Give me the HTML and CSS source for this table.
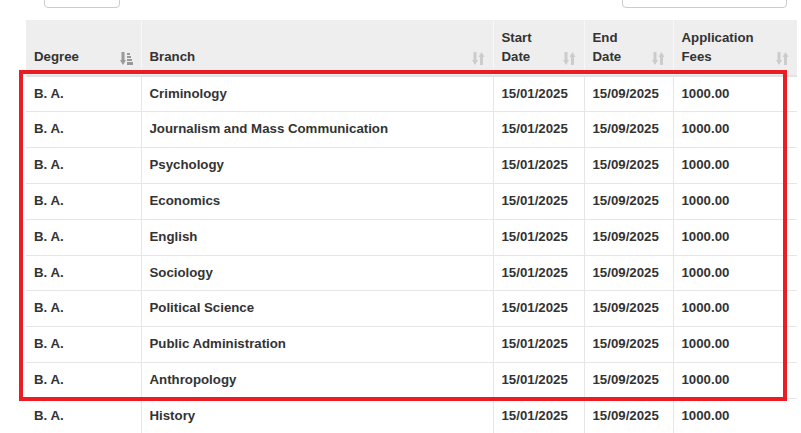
FILE: index.html
```html
<!DOCTYPE html>
<html>
<head>
<meta charset="utf-8">
<link rel="stylesheet" href="styles.css">
</head>
<body>
<div class="wrap">
  <div class="controls">
    <div class="select-box"></div>
    <div class="search-box"></div>
  </div>
  <table class="grid">
    <colgroup>
      <col class="c-degree"><col class="c-branch"><col class="c-start"><col class="c-end"><col class="c-fees">
    </colgroup>
    <thead>
      <tr>
        <th><div class="th-in"><span>Degree</span>
          <svg class="sort active" width="13" height="13" viewBox="0 0 13 13"><rect x="1.5" y="0" width="3" height="9"/><polygon points="0,8 6,8 3,13"/><rect x="7" y="1" width="3" height="2"/><rect x="7" y="4" width="4" height="2"/><rect x="7" y="7" width="5" height="2"/><rect x="7" y="10" width="6" height="3"/></svg></div></th>
        <th><div class="th-in"><span>Branch</span>
          <svg class="sort" width="13" height="13" viewBox="0 0 13 13"><rect x="1.5" y="0" width="3" height="9"/><polygon points="0,8 6,8 3,13"/><polygon points="6.5,5 12.5,5 9.5,0"/><rect x="8" y="4" width="3" height="9"/></svg></div></th>
        <th><div class="th-in"><span>Start<br>Date</span>
          <svg class="sort" width="13" height="13" viewBox="0 0 13 13"><rect x="1.5" y="0" width="3" height="9"/><polygon points="0,8 6,8 3,13"/><polygon points="6.5,5 12.5,5 9.5,0"/><rect x="8" y="4" width="3" height="9"/></svg></div></th>
        <th><div class="th-in"><span>End<br>Date</span>
          <svg class="sort" width="13" height="13" viewBox="0 0 13 13"><rect x="1.5" y="0" width="3" height="9"/><polygon points="0,8 6,8 3,13"/><polygon points="6.5,5 12.5,5 9.5,0"/><rect x="8" y="4" width="3" height="9"/></svg></div></th>
        <th><div class="th-in"><span>Application<br>Fees</span>
          <svg class="sort" width="13" height="13" viewBox="0 0 13 13"><rect x="1.5" y="0" width="3" height="9"/><polygon points="0,8 6,8 3,13"/><polygon points="6.5,5 12.5,5 9.5,0"/><rect x="8" y="4" width="3" height="9"/></svg></div></th>
      </tr>
    </thead>
    <tbody>
      <tr><td>B. A.</td><td>Criminology</td><td>15/01/2025</td><td>15/09/2025</td><td>1000.00</td></tr>
      <tr><td>B. A.</td><td>Journalism and Mass Communication</td><td>15/01/2025</td><td>15/09/2025</td><td>1000.00</td></tr>
      <tr><td>B. A.</td><td>Psychology</td><td>15/01/2025</td><td>15/09/2025</td><td>1000.00</td></tr>
      <tr><td>B. A.</td><td>Economics</td><td>15/01/2025</td><td>15/09/2025</td><td>1000.00</td></tr>
      <tr><td>B. A.</td><td>English</td><td>15/01/2025</td><td>15/09/2025</td><td>1000.00</td></tr>
      <tr><td>B. A.</td><td>Sociology</td><td>15/01/2025</td><td>15/09/2025</td><td>1000.00</td></tr>
      <tr><td>B. A.</td><td>Political Science</td><td>15/01/2025</td><td>15/09/2025</td><td>1000.00</td></tr>
      <tr><td>B. A.</td><td>Public Administration</td><td>15/01/2025</td><td>15/09/2025</td><td>1000.00</td></tr>
      <tr><td>B. A.</td><td>Anthropology</td><td>15/01/2025</td><td>15/09/2025</td><td>1000.00</td></tr>
      <tr><td>B. A.</td><td>History</td><td>15/01/2025</td><td>15/09/2025</td><td>1000.00</td></tr>
    </tbody>
  </table>
  <div class="highlight"></div>
</div>
</body>
</html>
```
FILE: styles.css
```css
html, body {
  margin: 0;
  padding: 0;
  background: #fff;
  overflow: hidden;
}
body {
  font-family: "Liberation Sans", Arial, sans-serif;
  font-size: 13.25px;
  color: #333;
}
.wrap {
  position: relative;
  display: flow-root;
  margin-left: 26px;
  width: 771px;
}
.controls {
  display: flex;
  justify-content: space-between;
  margin-top: -22px;
  height: 30px;
  margin-bottom: 12px;
}
.select-box {
  margin-left: 18px;
  width: 74px;
  height: 28px;
  border: 1px solid #ccc;
  border-radius: 4px;
}
.search-box {
  margin-right: 10px;
  width: 163px;
  height: 28px;
  border: 1px solid #ccc;
  border-radius: 4px;
}
.grid {
  width: 771px;
  table-layout: fixed;
  border-collapse: collapse;
  border-spacing: 0;
}
.c-degree { width: 115px; }
.c-branch { width: 352px; }
.c-start { width: 91px; }
.c-end { width: 89px; }
.c-fees { width: 124px; }
.grid th {
  background: #eeeeee;
  text-align: left;
  vertical-align: bottom;
  font-weight: bold;
  padding: 9px 8px 8px;
  line-height: 18.8px;
  border-bottom: 2px solid #e2e2e2;
}
.grid th + th {
  border-left: 1px solid #f8f8f8;
}
.th-in {
  display: flex;
  justify-content: space-between;
  align-items: flex-end;
}
.th-in span {
  height: 37.6px;
  display: flex;
  flex-direction: column;
  justify-content: flex-end;
}
.sort {
  flex: none;
  margin-bottom: 2px;
  fill: #cccccc;
}
.sort.active {
  fill: #999999;
}
.grid td {
  padding: 8px;
  line-height: 18.8px;
  font-weight: bold;
  border-top: 1px solid #e6e6e6;
  white-space: nowrap;
}
.grid td + td {
  border-left: 1px solid #e6e6e6;
}
.highlight {
  position: absolute;
  left: -7px;
  top: 70px;
  width: 768px;
  height: 331px;
  box-sizing: border-box;
  border: 4px solid #ec1c24;
  pointer-events: none;
}
```
